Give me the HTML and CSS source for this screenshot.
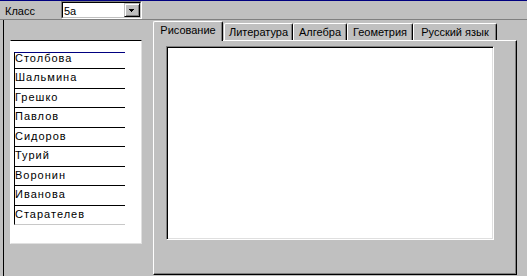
FILE: index.html
```html
<!DOCTYPE html>
<html lang="ru">
<head>
<meta charset="utf-8">
<title>Класс</title>
<link rel="stylesheet" href="styles.css">
</head>
<body>
<div class="titleline"></div>
<div class="header">
  <span class="lbl">Класс</span>
  <div class="combo">
    <div class="combo-in">
      <span class="combo-text">5а</span>
      <span class="combo-btn">
        <svg width="5" height="3" viewBox="0 0 5 3" shape-rendering="crispEdges"><rect x="0" y="0" width="5" height="1" fill="#000"/><rect x="1" y="1" width="3" height="1" fill="#000"/><rect x="2" y="2" width="1" height="1" fill="#000"/></svg>
      </span>
    </div>
  </div>
</div>
<div class="main">
  <div class="left">
    <div class="left-inner">
      <div class="grid">
        <div class="row first">Столбова</div>
        <div class="row">Шальмина</div>
        <div class="row">Грешко</div>
        <div class="row">Павлов</div>
        <div class="row">Сидоров</div>
        <div class="row">Турий</div>
        <div class="row">Воронин</div>
        <div class="row">Иванова</div>
        <div class="row last">Старателев</div>
      </div>
    </div>
  </div>
  <div class="tabs">
    <div class="tabstrip">
      <div class="tab active">Рисование</div>
      <div class="tab">Литература</div>
      <div class="tab">Алгебра</div>
      <div class="tab">Геометрия</div>
      <div class="tab">Русский язык</div>
    </div>
    <div class="panel">
      <div class="canvas"></div>
    </div>
  </div>
</div>
</body>
</html>
```

FILE: styles.css
```css
* { box-sizing: border-box; }
html, body { margin: 0; padding: 0; }
body {
  width: 527px;
  height: 276px;
  overflow: hidden;
  background: #c0c0c0;
  font-family: "Liberation Sans", Arial, sans-serif;
  font-size: 11px;
  color: #000;
}
.titleline { height: 1px; background: #000080; }

.header {
  height: 19px;
  border-bottom: 1px solid #808080;
  display: flex;
  align-items: flex-start;
}
.lbl {
  width: 61px;
  padding-left: 5px;
  line-height: 20px;
}
.combo {
  width: 81px;
  height: 18px;
  border-top: 1px solid #808080;
  border-left: 1px solid #808080;
  border-right: 1px solid #fff;
  border-bottom: 1px solid #fff;
}
.combo-in {
  height: 100%;
  display: flex;
  background: #fff;
  border-top: 1px solid #000;
  border-left: 1px solid #000;
  border-right: 1px solid #c0c0c0;
  border-bottom: 1px solid #c0c0c0;
}
.combo-text {
  padding-left: 1px;
  padding-top: 1px;
  line-height: 14px;
}
.combo-btn {
  margin-left: auto;
  width: 16px;
  height: 14px;
  background: #c0c0c0;
  border: 1px solid;
  border-color: #c0c0c0 #000 #000 #c0c0c0;
  box-shadow: inset 1px 1px #fff, inset -1px -1px #808080;
  display: flex;
  align-items: center;
  justify-content: center;
  padding-right: 1px;
}
.combo-btn svg { display: block; }

.main {
  display: flex;
  height: 256px;
}
.left {
  width: 153px;
  padding-left: 3px;
}
.left-inner {
  height: 100%;
  border-left: 1px solid #000;
  padding: 20px 0 0 6px;
}
.grid {
  width: 132px;
  height: 204px;
  background: #fff;
  border-top: 1px solid #000;
  border-left: 1px solid #fff;
  border-right: 1px solid #e0e0e0;
  border-bottom: 1px solid #e0e0e0;
  padding: 11px 0 0 3px;
}
.row {
  width: 111px;
  height: 19.5px;
  border-left: 1px solid #000;
  border-bottom: 1px solid #000;
  line-height: 17px;
  letter-spacing: 1px;
  white-space: nowrap;
}
.row.first {
  height: 17px;
  border-top: 1px solid #000080;
  line-height: 11px;
}
.row.last { border-bottom-color: #c8c8c8; }

.tabs {
  width: 364px;
  padding-top: 1px;
  display: flex;
  flex-direction: column;
}
.tabstrip {
  height: 19px;
  display: flex;
  align-items: flex-end;
}
.tab {
  height: 17px;
  background: #c0c0c0;
  border-top: 1px solid #fff;
  border-left: 1px solid #fff;
  border-right: 1px solid #000;
  border-radius: 2px 2px 0 0;
  box-shadow: inset -1px 0 #808080;
  line-height: 16px;
  text-align: center;
  white-space: nowrap;
  flex: none;
}
.tab:nth-child(1) { width: 70px; }
.tab:nth-child(2) { width: 69px; margin-left: 1px; }
.tab:nth-child(3) { width: 54px; }
.tab:nth-child(4) { width: 66px; }
.tab:nth-child(5) { width: 84px; }
.tab.active {
  height: 20px;
  margin-bottom: -1px;
  position: relative;
  z-index: 1;
}
.panel {
  height: 235px;
  border-top: 1px solid #fff;
  border-left: 1px solid #fff;
  border-right: 1px solid #000;
  border-bottom: 1px solid #000;
  box-shadow: inset -1px -1px #808080;
  padding: 5px 0 0 12px;
}
.canvas {
  width: 328px;
  height: 194px;
  background: #fff;
  border-top: 1px solid #808080;
  border-left: 1px solid #808080;
  border-right: 1px solid #fff;
  border-bottom: 1px solid #fff;
  box-shadow: inset 1px 1px #000, inset -1px -1px #dfdfdf;
}
```
